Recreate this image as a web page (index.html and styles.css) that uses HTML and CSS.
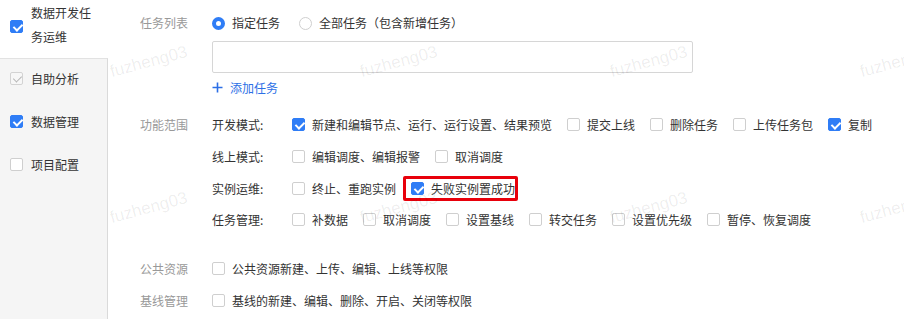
FILE: index.html
```html
<!DOCTYPE html>
<html lang="zh">
<head>
<meta charset="utf-8">
<link rel="stylesheet" href="styles.css">
</head>
<body>
<div class="page">
  <aside class="side">
    <div class="side-top">
      <span class="cb checked"></span>
      <span class="side-title">数据开发任务运维</span>
    </div>
    <div class="side-panel">
      <div class="side-item"><span class="cb disabled"></span>自助分析</div>
      <div class="side-item"><span class="cb checked"></span>数据管理</div>
      <div class="side-item"><span class="cb"></span>项目配置</div>
    </div>
  </aside>

  <main class="main">
    <div class="row row-task">
      <div class="label">任务列表</div>
      <div class="field">
        <span class="opt radio-opt"><span class="radio on"></span>指定任务</span>
        <span class="opt radio-opt"><span class="radio"></span>全部任务（包含新增任务）</span>
      </div>
    </div>
    <div class="row row-input">
      <div class="label"></div>
      <div class="input"></div>
    </div>
    <div class="row row-add">
      <div class="label"></div>
      <a class="add">
        <svg class="plus" width="11" height="11" viewBox="0 0 11 11"><path d="M5.5 0.5V10.5M0.5 5.5H10.5" stroke="#2c6fe6" stroke-width="1.6" fill="none"/></svg>
        添加任务
      </a>
    </div>

    <div class="row row-scope">
      <div class="label scope-label">功能范围</div>
      <div class="subrows">
        <div class="subrow">
          <div class="sublabel">开发模式:</div>
          <span class="opt"><span class="cb checked"></span>新建和编辑节点、运行、运行设置、结果预览</span>
          <span class="opt"><span class="cb"></span>提交上线</span>
          <span class="opt"><span class="cb"></span>删除任务</span>
          <span class="opt"><span class="cb"></span>上传任务包</span>
          <span class="opt"><span class="cb checked"></span>复制</span>
        </div>
        <div class="subrow">
          <div class="sublabel">线上模式:</div>
          <span class="opt"><span class="cb"></span>编辑调度、编辑报警</span>
          <span class="opt"><span class="cb"></span>取消调度</span>
        </div>
        <div class="subrow">
          <div class="sublabel">实例运维:</div>
          <span class="opt"><span class="cb"></span>终止、重跑实例</span>
          <span class="opt highlight"><span class="cb checked"></span>失败实例置成功</span>
        </div>
        <div class="subrow">
          <div class="sublabel">任务管理:</div>
          <span class="opt"><span class="cb"></span>补数据</span>
          <span class="opt"><span class="cb"></span>取消调度</span>
          <span class="opt"><span class="cb"></span>设置基线</span>
          <span class="opt"><span class="cb"></span>转交任务</span>
          <span class="opt"><span class="cb"></span>设置优先级</span>
          <span class="opt"><span class="cb"></span>暂停、恢复调度</span>
        </div>
      </div>
    </div>

    <div class="row row-line row-public">
      <div class="label">公共资源</div>
      <span class="opt"><span class="cb"></span>公共资源新建、上传、编辑、上线等权限</span>
    </div>
    <div class="row row-line">
      <div class="label">基线管理</div>
      <span class="opt"><span class="cb"></span>基线的新建、编辑、删除、开启、关闭等权限</span>
    </div>
  </main>

  <div class="wm">
    <span class="mark m1">fuzheng03</span>
    <span class="mark m2">fuzheng03</span>
    <span class="mark m3">fuzheng03</span>
    <span class="mark m4">fuzheng03</span>
    <span class="mark m5">fuzheng03</span>
    <span class="mark m6">fuzheng03</span>
    <span class="mark m7">fuzheng03</span>
    <span class="mark m8">fuzheng03</span>
  </div>
</div>
</body>
</html>
```
FILE: styles.css
```css
* { box-sizing: border-box; }

body {
  margin: 0;
  background: #fff;
  font-family: "Noto Sans CJK SC", "Noto Sans", sans-serif;
  font-size: 12px;
  color: #333;
}

.page {
  position: relative;
  display: flex;
  height: 319px;
  overflow: hidden;
}

/* sidebar */
.side {
  width: 108px;
  flex: none;
  display: flex;
  flex-direction: column;
}

.side-top {
  height: 58px;
  display: flex;
  align-items: flex-start;
  padding: 1px 0 0 10px;
}

.side-top .cb { margin-top: 19px; margin-right: 8px; }

.side-title {
  width: 64px;
  line-height: 24px;
}

.side-panel {
  flex: 1;
  background: #f5f5f5;
  border-top: 1px solid #e2e2e2;
  border-right: 1px solid #dadada;
  padding: 8px 0 0 10px;
  display: flex;
  flex-direction: column;
  gap: 21px;
}

.side-item {
  display: flex;
  align-items: center;
  height: 22px;
}

.side-item .cb { margin-right: 8px; }

/* checkbox */
.cb {
  position: relative;
  display: inline-block;
  flex: none;
  width: 13px;
  height: 13px;
  border: 1px solid #cfcfcf;
  border-radius: 2px;
  background: #fff;
  margin-right: 7px;
}

.cb.checked {
  background: #2f7df6;
  border-color: #2f7df6;
}

.cb.checked::after,
.cb.disabled::after {
  content: "";
  position: absolute;
  left: 3.5px;
  top: 1px;
  width: 4px;
  height: 7px;
  border-right: 2px solid #fff;
  border-bottom: 2px solid #fff;
  transform: rotate(45deg);
}

.cb.disabled {
  background: #f7f7f7;
  border-color: #d3d3d3;
}

.cb.disabled::after {
  border-color: #b5b5b5;
  border-width: 0 1.5px 1.5px 0;
}

/* radio */
.radio {
  display: inline-block;
  flex: none;
  width: 13px;
  height: 13px;
  border-radius: 50%;
  border: 1px solid #cfcfcf;
  background: #fff;
  margin-right: 7px;
}

.radio.on {
  border: 4px solid #2f7df6;
}

/* main */
.main {
  flex: 1;
  padding: 12px 0 0 32px;
}

.row { display: flex; }

.label {
  width: 72px;
  flex: none;
  color: #999;
  line-height: 22px;
}

.field { display: flex; align-items: center; }

.opt {
  display: inline-flex;
  align-items: center;
  margin-right: 15px;
  white-space: nowrap;
}

.radio-opt { margin-right: 19px; line-height: 22px; }

.row-input { margin-top: 7px; }

.input {
  width: 481px;
  height: 32px;
  border: 1px solid #d6d6d6;
  border-radius: 2px;
  background: #fff;
}

.row-add {
  margin-top: 3px;
  height: 22px;
  align-items: center;
}

.add {
  display: inline-flex;
  align-items: center;
  color: #2c6fe6;
  cursor: pointer;
}

.plus { margin-right: 7px; }

.row-scope { margin-top: 11px; }

.scope-label { line-height: 31.67px; }

.subrows { display: flex; flex-direction: column; }

.subrow {
  display: flex;
  align-items: center;
  height: 31.67px;
}

.sublabel {
  width: 80px;
  flex: none;
}

.highlight {
  margin-left: -8px;
  height: 25px;
  padding-left: 5px;
  border: 3px solid #e8000b;
  border-radius: 2px;
}

.row-line {
  height: 32px;
  align-items: center;
}

.row-line .label { line-height: 32px; }

.row-public { margin-top: 17px; }

/* watermark overlay */
.wm {
  position: absolute;
  inset: 0;
  pointer-events: none;
}

.mark {
  position: absolute;
  font-family: "Liberation Sans", Arial, sans-serif;
  font-size: 17px;
  line-height: 20px;
  color: rgba(0, 0, 0, 0.075);
  transform: rotate(-15deg);
  transform-origin: left bottom;
  white-space: nowrap;
}

.m1 { left: 113px; top: 62px; }
.m2 { left: 363px; top: 62px; }
.m3 { left: 613px; top: 62px; }
.m4 { left: 863px; top: 62px; }
.m5 { left: 113px; top: 208px; }
.m6 { left: 363px; top: 208px; }
.m7 { left: 613px; top: 208px; }
.m8 { left: 863px; top: 208px; }
```
